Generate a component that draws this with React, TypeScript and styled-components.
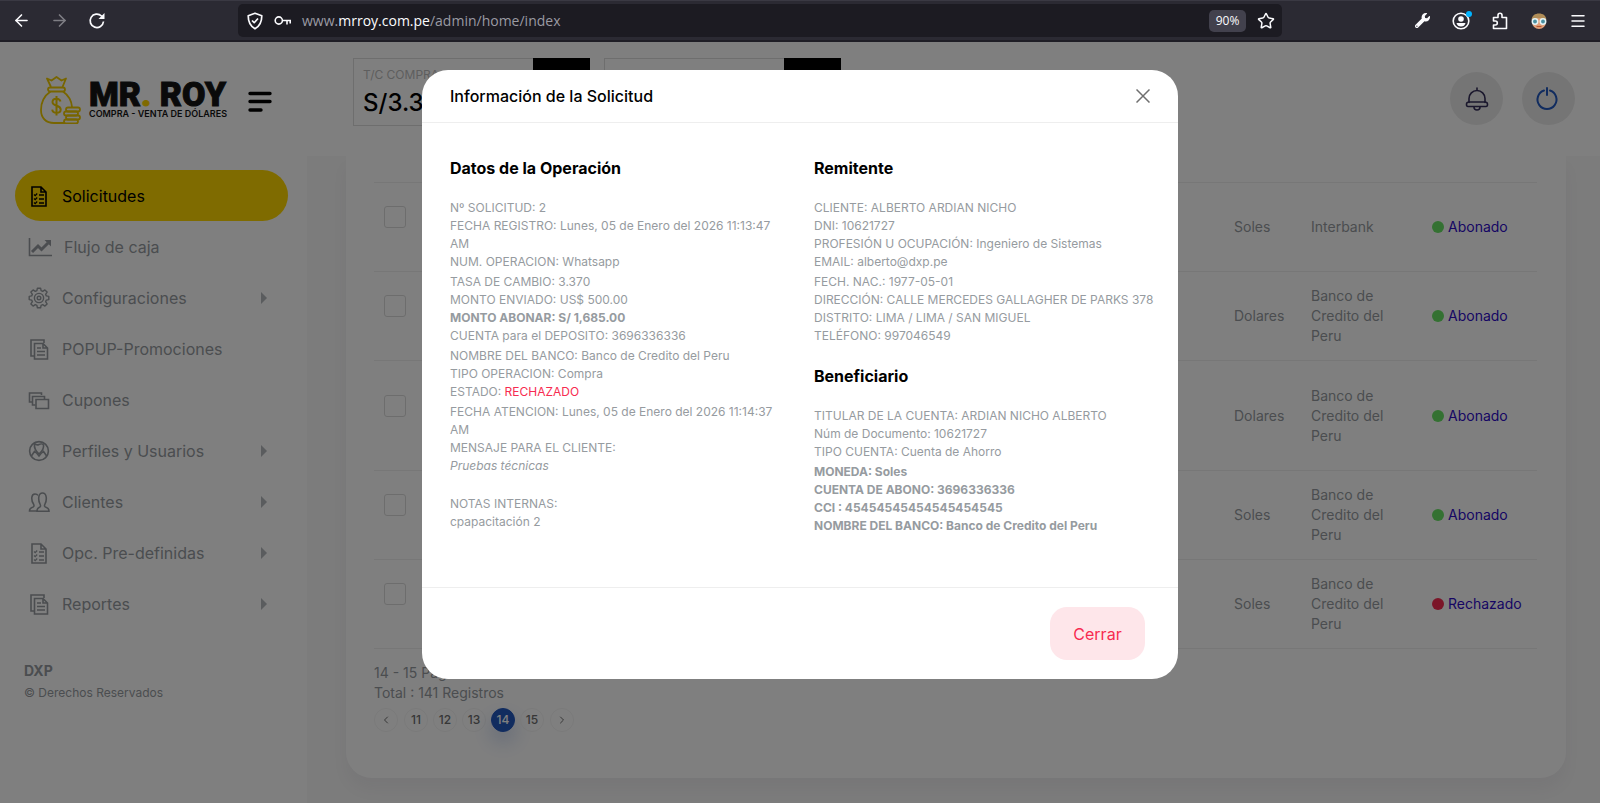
import React from 'react';
import styled, { createGlobalStyle } from 'styled-components';
import { FaWrench } from 'react-icons/fa';
import { ArrowLeft, ArrowRight, ChevronLeft, ChevronRight, Menu, Star } from 'lucide-react';

const ink = '#969ba0';
const line = '#eeeeee';
const danger = '#f72b50';
const blue = '#2258bf';

const GlobalStyle = createGlobalStyle`
  *, *::before, *::after { box-sizing: border-box; }
  body {
    margin: 0;
    background: #f8f8f8;
    color: ${ink};
    font-family: Inter, sans-serif;
    font-size: 14px;
    line-height: 20px;
  }
  button { font: inherit; color: inherit; border: 0; background: none; padding: 0; cursor: pointer; }
  a { color: inherit; text-decoration: none; }
  h1, h2, h3, p, ul { margin: 0; padding: 0; }
  ul { list-style: none; }
  svg { display: block; flex: none; }
`;

const Shell = styled.div`
  display: flex;
  flex-direction: column;
  min-height: 100vh;
`;

/* Browser toolbar */
const Toolbar = styled.header`
  display: flex;
  align-items: center;
  height: 42px;
  padding: 0 12px 0 11px;
  background: #2b2a33;
  border-top: 1px solid #3a3943;
  border-bottom: 2px solid #1f1e26;
  color: #fbfbfe;
`;

const ToolGroup = styled.div<{ $gap: number }>`
  display: flex;
  align-items: center;
  gap: ${(p) => p.$gap}px;
`;

const ToolButton = styled.button<{ $dim?: boolean }>`
  display: grid;
  place-items: center;
  position: relative;
  width: 20px;
  height: 20px;
  opacity: ${(p) => (p.$dim ? 0.4 : 1)};
`;

const AddressBar = styled.div`
  display: flex;
  flex: 1;
  align-items: center;
  gap: 10px;
  height: 33px;
  margin: 0 130px 0 131px;
  padding: 0 6px 0 8px;
  border-radius: 5px;
  background: #1c1b22;
`;

const Address = styled.div`
  flex: 1;
  color: #9a9aa2;
  font-family: "Open Sans", sans-serif;
  font-size: 14px;
  b { color: #fbfbfe; font-weight: 400; }
`;

const ZoomBadge = styled.button`
  width: 37px;
  height: 22px;
  border-radius: 5px;
  background: #42414d;
  color: #fbfbfe;
  font-family: "Open Sans", sans-serif;
  font-size: 12px;
`;

const Dot = styled.i`
  position: absolute;
  top: 0;
  right: -1px;
  width: 6px;
  height: 6px;
  border-radius: 50%;
  background: #00b3ff;
`;

/* Page */
const Page = styled.div`
  display: flex;
  flex: 1;
  position: relative;
`;

const Sidebar = styled.aside`
  width: 307px;
  flex: none;
  background: #fff;
`;

const Brand = styled.div`
  display: flex;
  align-items: center;
  height: 114px;
  padding: 2px 0 0 40px;
`;

const BrandName = styled.a`
  display: block;
  margin: 0 22px 0 8px;
  width: 137px;
  white-space: nowrap;
`;

const BrandTitle = styled.span`
  display: block;
  color: #151515;
  font-family: Roboto, sans-serif;
  font-size: 34px;
  font-weight: 900;
  line-height: 28px;
  -webkit-text-stroke: 1px;
  i { color: #ffd500; font-style: normal; }
`;

const BrandTag = styled.span`
  display: block;
  color: #151515;
  font-size: 9px;
  font-weight: 600;
  line-height: 12px;
`;

const MenuToggle = styled.button`
  padding-top: 2px;
`;

const Nav = styled.ul`
  padding: 14px 19px 0 15px;
`;

const NavLink = styled.a<{ $active?: boolean }>`
  display: flex;
  align-items: center;
  gap: 11px;
  height: 51px;
  padding: 0 21px 0 12px;
  border-radius: 26px;
  background: ${(p) => (p.$active ? '#ffd600' : 'transparent')};
  color: ${(p) => (p.$active ? '#000' : ink)};
  font-size: 16px;
  span { flex: 1; }
`;

const Copyright = styled.footer`
  padding: 31px 24px;
  font-size: 12px;
  line-height: 22px;
  strong { display: block; font-size: 14px; }
`;

const Main = styled.main`
  flex: 1;
  min-width: 0;
`;

const TopBar = styled.div`
  display: flex;
  align-items: flex-start;
  height: 114px;
  padding: 16px 25px 0 46px;
  background: #fff;
`;

const Rate = styled.div`
  display: flex;
  width: 237px;
  height: 68px;
  margin-right: 14px;
  border: 1px solid #dcdcdc;
  border-right: 0;
`;

const RateText = styled.div`
  flex: 1;
  padding: 6px 9px;
  color: #bdbdbd;
  font-size: 12px;
  strong {
    display: block;
    color: #000;
    font-size: 24px;
    font-weight: 500;
    line-height: 36px;
  }
`;

const RateAction = styled.button`
  width: 57px;
  margin: -1px 0;
  background: #000;
`;

const Actions = styled.div`
  display: flex;
  gap: 19px;
  margin: 14px 0 0 auto;
`;

const RoundButton = styled.button<{ $color: string }>`
  display: grid;
  place-items: center;
  width: 53px;
  height: 53px;
  border-radius: 50%;
  background: #ebebeb;
  color: ${(p) => p.$color};
`;

const Card = styled.section`
  margin: 0 34px 24px 39px;
  padding: 26px 29px 46px 28px;
  border-radius: 0 0 26px 26px;
  background: #fff;
  box-shadow: 0 12px 15px 0 rgba(82, 63, 105, 0.05);
`;

const Requests = styled.table`
  width: 100%;
  table-layout: fixed;
  border-collapse: collapse;
  border-top: 1px solid ${line};
`;

const Row = styled.tr<{ $tall?: boolean }>`
  height: ${(p) => (p.$tall ? 110 : 89)}px;
  border-bottom: 1px solid ${line};
`;

const Cell = styled.td`
  padding: 0 20px 0 10px;
  vertical-align: middle;
`;

const WordCell = styled(Cell)`
  padding-right: 0;
`;

const Check = styled.input`
  appearance: none;
  display: block;
  width: 22px;
  height: 22px;
  margin: 0 0 20px;
  border: 1px solid #dadada;
  border-radius: 3px;
`;

const Status = styled.a<{ $tone: string }>`
  display: flex;
  align-items: center;
  gap: 4px;
  color: #2e0bc8;
  &::before {
    content: "";
    width: 12px;
    height: 12px;
    border-radius: 50%;
    background: ${(p) => p.$tone};
  }
`;

const Summary = styled.p`
  padding: 14px 0 5px;
`;

const Pager = styled.nav`
  display: flex;
  gap: 6px;
`;

const PageNumbers = styled.div`
  display: flex;
  gap: 5px;
`;

const PageButton = styled.button<{ $current?: boolean }>`
  display: grid;
  place-items: center;
  width: 24px;
  height: 24px;
  border: 1px solid ${(p) => (p.$current ? blue : '#f5f5f5')};
  border-radius: 50%;
  background: ${(p) => (p.$current ? blue : 'transparent')};
  box-shadow: ${(p) => (p.$current ? '0 10px 20px rgba(34, 88, 191, 0.25)' : 'none')};
  color: ${(p) => (p.$current ? '#fff' : '#6e6e6e')};
  font-size: 12px;
  font-weight: 500;
`;

/* Dialog */
const Backdrop = styled.div`
  position: absolute;
  inset: 0;
  padding-top: 28px;
  background: rgba(0, 0, 0, 0.5);
`;

const Dialog = styled.section`
  width: 756px;
  max-width: 100%;
  margin: 0 auto;
  border-radius: 26px;
  background: #fff;
`;

const DialogHeader = styled.header`
  display: flex;
  align-items: center;
  justify-content: space-between;
  height: 53px;
  padding: 0 28px;
  border-bottom: 1px solid ${line};
`;

const DialogTitle = styled.h1`
  color: #000;
  font-size: 16px;
  font-weight: 500;
`;

const CloseButton = styled.button`
  color: #6f6f6f;
`;

const DialogBody = styled.div`
  display: grid;
  grid-template-columns: 1fr 1fr;
  padding: 33px 0 52px 28px;
`;

const Column = styled.div<{ $end: number }>`
  display: flex;
  flex-direction: column;
  gap: 19px;
  padding-right: ${(p) => p.$end}px;
`;

const SectionTitle = styled.h2`
  color: #000;
  font-size: 16px;
  font-weight: 700;
  line-height: 24px;
`;

const Details = styled.div`
  display: flex;
  flex-direction: column;
  gap: 2px;
  font-size: 12px;
  line-height: 18px;
`;

const DialogFooter = styled.footer`
  display: flex;
  justify-content: flex-end;
  padding: 19px 33px;
  border-top: 1px solid ${line};
`;

const DismissButton = styled.button`
  width: 95px;
  height: 53px;
  border-radius: 17px;
  background: #fee6ea;
  color: ${danger};
  font-size: 16px;
`;

const Rejected = styled.span`
  color: ${danger};
`;

const Icon = ({ w = 24, children, sw = 1.6 }: { w?: number; sw?: number; children: React.ReactNode }) => (
  <svg width={w} height="24" viewBox={`0 0 ${w} 24`} fill="none" stroke="currentColor" strokeWidth={sw} aria-hidden="true">
    {children}
  </svg>
);

const ChecklistIcon = () => (
  <Icon>
    <path d="M5 3h9l5 5v14H5z M14 3v5h5" />
    <path d="M12 11h5M12 15h5M12 19h5" strokeWidth="1.4" />
    <path d="M7 10.500l1.200 1.200 2-2.200M7 14.500l1.200 1.200 2-2.200M7 18.500l1.200 1.200 2-2.200" strokeWidth="1.200" />
  </Icon>
);
const ChartIcon = () => (
  <Icon w={26}>
    <path d="M2.500 3v17.500H25" />
    <path d="M5 17l6-6 3.500 3.500L21 8" strokeWidth="3" />
    <path d="M17.500 5H24v6.500z" fill="currentColor" stroke="none" />
  </Icon>
);
const GearIcon = () => (
  <Icon sw={1.4}>
    <path
      strokeLinejoin="round"
      d="M10.400 2.200h3.200l.5 2.500 1.600.7 2.200-1.500 2.200 2.200-1.500 2.200.7 1.600 2.500.5v3.200l-2.500.5-.7 1.600 1.500 2.200-2.200 2.200-2.200-1.500-1.600.7-.5 2.500h-3.200l-.5-2.500-1.600-.7-2.200 1.500-2.200-2.200 1.500-2.200-.7-1.600-2.500-.5v-3.200l2.500-.5.7-1.600-1.500-2.200 2.200-2.200 2.200 1.500 1.600-.7z"
    />
    <circle cx="12" cy="12" r="4.600" />
    <circle cx="12" cy="12" r="1.800" />
  </Icon>
);
const PagesIcon = () => (
  <Icon>
    <path d="M7 19H4V3h13v3" />
    <path d="M7.500 6.500h8.500l4.500 4.500v11h-13z M16 6.500v4.500h4.500" />
    <path d="M10 11h4M10 14.500h8M10 18h8" strokeWidth="1.400" />
  </Icon>
);
const CouponsIcon = () => (
  <Icon>
    <path d="M5.500 14H2.500V5h12v2" />
    <path d="M8.500 17H5.500V8.500h12V11" />
    <path d="M9 11.500h12.500v9H9z" />
  </Icon>
);
const ProfilesIcon = () => (
  <Icon>
    <circle cx="12" cy="12" r="9.400" />
    <path d="M7.500 4.500C9 6 11 6 12 5.500c2-1 4-.5 4.500.5.500 3-1 6-4.500 9-3.500-3-5-7-4.500-10.500z" />
    <path d="M4 17.500l3.500-5 2.500 2 2 2.500 2-2.500 2.500-2 3.500 5" />
  </Icon>
);
const ClientsIcon = () => (
  <Icon>
    <path d="M11 21H2.500c0-2 .5-2.800 2.500-3.500 2-.7 2.500-1.500 1.500-3.500C4 10 4 4 8 4c1.500 0 2.500.5 3 1.500" />
    <path d="M10 21.200h12c0-2.200-.5-3-2.500-3.700-2-.7-2.500-1.500-1.500-3.500 2-4 2-11-2.500-11S11 10 13 14c1 2 .5 2.800-1 3.500-1.500.7-2 1.500-2 3.700z" />
  </Icon>
);
const Caret = () => (
  <svg width="6" height="12" viewBox="0 0 6 12" fill="currentColor" opacity="0.7" aria-hidden="true">
    <path d="M0 0l6 6-6 6z" />
  </svg>
);

const MoneyBag = () => (
  <svg width="41" height="48" viewBox="0 0 41 48" fill="none" stroke="#f0cb00" strokeWidth="1.800" strokeLinejoin="round" aria-hidden="true">
    <path d="M11 11L7 2.500l4.500 2L16.500 1l5 3.500 4.500-2L22.500 11" />
    <rect x="8" y="11.500" width="17" height="4" rx="2" />
    <path d="M10.500 15.500C4 20 1 26 1 34c0 8 5 13 13 13h11M23 15.500c5 3.500 8.500 9 9 15.500" />
    <path d="M20.500 25.500c-.5-2-2-2.800-4-2.800-2.400 0-4 1.200-4 3.300 0 5 8.200 2.500 8.200 7.400 0 2.200-1.800 3.400-4.200 3.400-2.300 0-4-1-4.300-3.200M16.500 20v19.500" strokeWidth="2" />
    <rect x="26" y="31.500" width="14" height="4" rx="2" />
    <rect x="24" y="35.500" width="14" height="4" rx="2" />
    <rect x="26" y="39.500" width="14" height="4" rx="2" />
    <rect x="24" y="43.500" width="14" height="4" rx="2" />
  </svg>
);

const MenuBars = () => (
  <svg width="24" height="21" viewBox="0 0 24 21" stroke="#000" strokeWidth="3.400" strokeLinecap="round" aria-hidden="true">
    <path d="M2 2.500h20M2 10.500h20M2 19h11" />
  </svg>
);

const ReloadIcon = () => (
  <svg width="18" height="18" viewBox="0 0 18 18" fill="none" stroke="currentColor" strokeWidth="1.700" aria-hidden="true">
    <path d="M15.500 9.500a6.700 6.700 0 1 1-2-5.500l1.500 1.500" />
    <path d="M16.500 1v6h-6z" fill="currentColor" stroke="none" />
  </svg>
);
const ShieldIcon = () => (
  <svg width="18" height="18" viewBox="0 0 18 18" fill="none" stroke="currentColor" strokeWidth="1.700" strokeLinejoin="round" aria-hidden="true">
    <path d="M9 1.200l6.800 2.600c0 6-1.600 10.200-6.800 13-5.200-2.800-6.800-7-6.800-13z" />
    <path d="M6 8.500l2.200 2.200L12 6.500" />
  </svg>
);
const KeyIcon = () => (
  <svg width="18" height="12" viewBox="0 0 18 12" fill="none" stroke="currentColor" strokeWidth="1.600" aria-hidden="true">
    <circle cx="4.800" cy="5.500" r="3.600" />
    <path d="M8.400 5.500H17M13 5.500v4M16.200 5.500v3" />
  </svg>
);
const AccountIcon = () => (
  <svg width="18" height="18" viewBox="0 0 18 18" fill="none" stroke="currentColor" strokeWidth="1.600" aria-hidden="true">
    <circle cx="9" cy="9" r="7.800" />
    <circle cx="9" cy="7" r="2.800" fill="currentColor" stroke="none" />
    <path d="M4.500 11h9c-.5 2.500-2.300 3.500-4.500 3.500S5 13.500 4.500 11z" fill="currentColor" stroke="none" />
  </svg>
);
const PuzzleIcon = () => (
  <svg width="16" height="18" viewBox="0 0 16 18" fill="none" stroke="currentColor" strokeWidth="1.600" strokeLinejoin="round" aria-hidden="true">
    <path d="M1.500 9V5.500H6V3.300a2 2 0 0 1 4 0v2.200h4.500v11H1.500V13h1.800a2 2 0 0 0 0-4z" />
  </svg>
);
const FaceIcon = () => (
  <svg width="18" height="18" viewBox="0 0 18 18" aria-hidden="true">
    <circle cx="9" cy="10" r="7" fill="#e0a07a" />
    <path d="M1.500 8C2 3.500 5 1.500 9 1.500s7 2 7.500 6.500c-3-2.500-12-2.500-15 0z" fill="#b08d58" />
    <circle cx="5" cy="9.500" r="2.700" fill="#4a8fa0" stroke="#e6f4f7" strokeWidth="1.500" />
    <circle cx="13" cy="9.500" r="2.700" fill="#4a8fa0" stroke="#e6f4f7" strokeWidth="1.500" />
    <path d="M6.500 14.500h5" stroke="#b5552f" strokeWidth="1.200" />
  </svg>
);
const BellIcon = () => (
  <svg width="24" height="24" viewBox="0 0 24 24" fill="none" stroke="currentColor" strokeWidth="1.600" strokeLinecap="round" strokeLinejoin="round" aria-hidden="true">
    <path d="M12 1v2.500M4 15.500V11.500a8 8 0 0 1 16 0v4" />
    <path d="M3.500 15h17a2.500 2.500 0 0 1 2 2.500c0 1.200-.6 2-1.500 2H3c-.9 0-1.500-.8-1.500-2a2.500 2.500 0 0 1 2-2.500z" />
    <path d="M9 20a3 3 0 0 0 6 0" />
  </svg>
);
const PowerIcon = () => (
  <svg width="28" height="24" viewBox="0 0 28 24" fill="none" stroke="currentColor" strokeWidth="2" strokeLinecap="round" aria-hidden="true">
    <path d="M9 3.500a9.500 9.500 0 1 0 6 0M12 1v7" />
  </svg>
);
const CrossIcon = () => (
  <svg width="14" height="14" viewBox="0 0 14 14" stroke="currentColor" strokeWidth="1.500" aria-hidden="true">
    <path d="M.5.5l13 13M13.500.5l-13 13" />
  </svg>
);

const menu = [
  { label: 'Solicitudes', icon: <ChecklistIcon />, active: true },
  { label: 'Flujo de caja', icon: <ChartIcon /> },
  { label: 'Configuraciones', icon: <GearIcon />, nested: true },
  { label: 'POPUP-Promociones', icon: <PagesIcon /> },
  { label: 'Cupones', icon: <CouponsIcon /> },
  { label: 'Perfiles y Usuarios', icon: <ProfilesIcon />, nested: true },
  { label: 'Clientes', icon: <ClientsIcon />, nested: true },
  { label: 'Opc. Pre-definidas', icon: <ChecklistIcon />, nested: true },
  { label: 'Reportes', icon: <PagesIcon />, nested: true },
];

const green = '#68e365';
const requests = [
  { currency: 'Soles', bank: 'Interbank', status: 'Abonado', tone: green },
  { currency: 'Dolares', bank: 'Banco de Credito del Peru', status: 'Abonado', tone: green },
  { currency: 'Dolares', bank: 'Banco de Credito del Peru', status: 'Abonado', tone: green, tall: true },
  { currency: 'Soles', bank: 'Banco de Credito del Peru', status: 'Abonado', tone: green },
  { currency: 'Soles', bank: 'Banco de Credito del Peru', status: 'Rechazado', tone: danger },
];

const BrowserToolbar = () => (
  <Toolbar>
    <ToolGroup $gap={18}>
      <ToolButton aria-label="Atrás"><ArrowLeft size={19} /></ToolButton>
      <ToolButton aria-label="Adelante" $dim><ArrowRight size={19} /></ToolButton>
      <ToolButton aria-label="Recargar"><ReloadIcon /></ToolButton>
    </ToolGroup>
    <AddressBar>
      <ShieldIcon />
      <KeyIcon />
      <Address>www.<b>mrroy.com.pe</b>/admin/home/index</Address>
      <ZoomBadge>90%</ZoomBadge>
      <ToolButton aria-label="Marcador"><Star size={18} /></ToolButton>
    </AddressBar>
    <ToolGroup $gap={19}>
      <ToolButton aria-label="Herramientas"><FaWrench size={15} /></ToolButton>
      <ToolButton aria-label="Cuenta"><AccountIcon /><Dot /></ToolButton>
      <ToolButton aria-label="Extensiones"><PuzzleIcon /></ToolButton>
      <ToolButton aria-label="Perfil"><FaceIcon /></ToolButton>
      <ToolButton aria-label="Menú"><Menu size={18} /></ToolButton>
    </ToolGroup>
  </Toolbar>
);

export default function App() {
  return (
    <Shell>
      <GlobalStyle />
      <BrowserToolbar />
      <Page>
        <Sidebar>
          <Brand>
            <MoneyBag />
            <BrandName href="#">
              <BrandTitle>MR<i>.</i> ROY</BrandTitle>
              <BrandTag>COMPRA - VENTA DE DÓLARES</BrandTag>
            </BrandName>
            <MenuToggle aria-label="Contraer menú"><MenuBars /></MenuToggle>
          </Brand>
          <Nav>
            {menu.map((m) => (
              <li key={m.label}>
                <NavLink href="#" $active={m.active}>
                  {m.icon}
                  <span>{m.label}</span>
                  {m.nested && <Caret />}
                </NavLink>
              </li>
            ))}
          </Nav>
          <Copyright>
            <strong>DXP</strong>
            © Derechos Reservados
          </Copyright>
        </Sidebar>

        <Main>
          <TopBar>
            <Rate>
              <RateText>T/C COMPRA<strong>S/3.370</strong></RateText>
              <RateAction aria-label="Editar compra" />
            </Rate>
            <Rate>
              <RateText>T/C VENTA</RateText>
              <RateAction aria-label="Editar venta" />
            </Rate>
            <Actions>
              <RoundButton $color="#342e59" aria-label="Notificaciones"><BellIcon /></RoundButton>
              <RoundButton $color={blue} aria-label="Salir"><PowerIcon /></RoundButton>
            </Actions>
          </TopBar>
          <Card>
            <Requests aria-label="Solicitudes">
              <colgroup>
                <col style={{ width: 60 }} />
                <col />
                <col style={{ width: 77 }} />
                <col style={{ width: 121 }} />
                <col style={{ width: 115 }} />
              </colgroup>
              <tbody>
                {requests.map((r, i) => (
                  <Row key={i} $tall={r.tall}>
                    <Cell><Check type="checkbox" aria-label={`Seleccionar solicitud ${i + 1}`} /></Cell>
                    <Cell />
                    <WordCell>{r.currency}</WordCell>
                    <Cell>{r.bank}</Cell>
                    <WordCell><Status href="#" $tone={r.tone}>{r.status}</Status></WordCell>
                  </Row>
                ))}
              </tbody>
            </Requests>
            <Summary>14 - 15 Páginas<br />Total : 141 Registros</Summary>
            <Pager aria-label="Páginas">
              <PageButton aria-label="Anterior"><ChevronLeft size={12} /></PageButton>
              <PageNumbers>
                {[11, 12, 13, 14, 15].map((n) => (
                  <PageButton key={n} $current={n === 14}>{n}</PageButton>
                ))}
              </PageNumbers>
              <PageButton aria-label="Siguiente"><ChevronRight size={12} /></PageButton>
            </Pager>
          </Card>
        </Main>

        <Backdrop>
          <Dialog role="dialog" aria-labelledby="dialog-title">
            <DialogHeader>
              <DialogTitle id="dialog-title">Información de la Solicitud</DialogTitle>
              <CloseButton aria-label="Cerrar ventana"><CrossIcon /></CloseButton>
            </DialogHeader>
            <DialogBody>
              <Column $end={30}>
                <SectionTitle>Datos de la Operación</SectionTitle>
                <Details>
                  <div>
                    <p>Nº SOLICITUD: 2</p>
                    <p>FECHA REGISTRO: Lunes, 05 de Enero del 2026 11:13:47 AM</p>
                    <p>NUM. OPERACION: Whatsapp</p>
                  </div>
                  <div>
                    <p>TASA DE CAMBIO: 3.370</p>
                    <p>MONTO ENVIADO: US$ 500.00</p>
                    <p><b>MONTO ABONAR: S/ 1,685.00</b></p>
                    <p>CUENTA para el DEPOSITO: 3696336336</p>
                  </div>
                  <div>
                    <p>NOMBRE DEL BANCO: Banco de Credito del Peru</p>
                    <p>TIPO OPERACION: Compra</p>
                    <p>ESTADO: <Rejected>RECHAZADO</Rejected></p>
                  </div>
                  <div>
                    <p>FECHA ATENCION: Lunes, 05 de Enero del 2026 11:14:37 AM</p>
                    <p>MENSAJE PARA EL CLIENTE:</p>
                    <p><em>Pruebas técnicas</em></p>
                  </div>
                  <div>
                    <br />
                    <p>NOTAS INTERNAS:</p>
                    <p>cpapacitación 2</p>
                  </div>
                </Details>
              </Column>
              <Column $end={10}>
                <SectionTitle>Remitente</SectionTitle>
                <Details>
                  <div>
                    <p>CLIENTE: ALBERTO ARDIAN NICHO</p>
                    <p>DNI: 10621727</p>
                    <p>PROFESIÓN U OCUPACIÓN: Ingeniero de Sistemas</p>
                    <p>EMAIL: alberto@dxp.pe</p>
                  </div>
                  <div>
                    <p>FECH. NAC.: 1977-05-01</p>
                    <p>DIRECCIÓN: CALLE MERCEDES GALLAGHER DE PARKS 378</p>
                    <p>DISTRITO: LIMA / LIMA / SAN MIGUEL</p>
                    <p>TELÉFONO: 997046549</p>
                  </div>
                </Details>
                <SectionTitle>Beneficiario</SectionTitle>
                <Details>
                  <div>
                    <p>TITULAR DE LA CUENTA: ARDIAN NICHO ALBERTO</p>
                    <p>Núm de Documento: 10621727</p>
                    <p>TIPO CUENTA: Cuenta de Ahorro</p>
                  </div>
                  <div>
                    <p><b>MONEDA: Soles</b></p>
                    <p><b>CUENTA DE ABONO: 3696336336</b></p>
                    <p><b>CCI : 45454545454545454545</b></p>
                    <p><b>NOMBRE DEL BANCO: Banco de Credito del Peru</b></p>
                  </div>
                </Details>
              </Column>
            </DialogBody>
            <DialogFooter>
              <DismissButton>Cerrar</DismissButton>
            </DialogFooter>
          </Dialog>
        </Backdrop>
      </Page>
    </Shell>
  );
}
